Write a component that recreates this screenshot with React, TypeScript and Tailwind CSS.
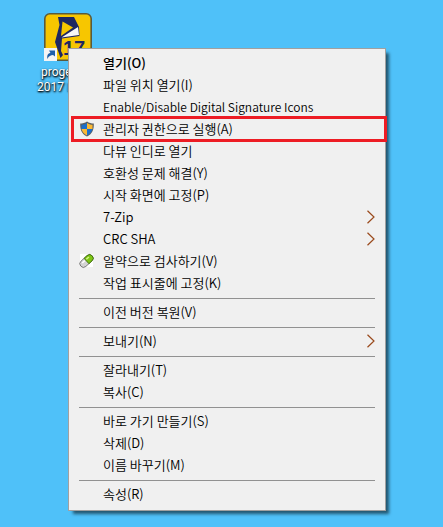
import React from 'react';
import clsx from 'clsx';

type MenuEntry = {
    label: string;
    bold?: boolean;
    small?: boolean;
    submenu?: boolean;
    highlighted?: boolean;
    icon?: React.ReactNode;
};

/**
 * 관리자 권한 방패 아이콘
 */
function ShieldIcon() {
    return (
        <svg viewBox="0 0 16 16" className="size-4" aria-hidden="true">
            <path d="M8 0.5 C6 2 3.5 2.6 1.2 2.6 C1 8.5 2.5 13 8 15.6 C13.5 13 15 8.5 14.8 2.6 C12.5 2.6 10 2 8 0.5Z" fill="#5c5f61" />
            <path d="M8 2 C6.3 3.1 4.5 3.7 2.5 3.8 V8 H8Z" fill="#1b6fcb" />
            <path d="M8 2 C9.7 3.1 11.5 3.7 13.5 3.8 V8 H8Z" fill="#fcb932" />
            <path d="M2.5 8 C3.2 11 5 13 8 14.4 V8Z" fill="#fcb932" />
            <path d="M13.5 8 C12.8 11 11 13 8 14.4 V8Z" fill="#1b6fcb" />
        </svg>
    );
}

/**
 * 알약 아이콘
 */
function PillIcon() {
    return (
        <svg viewBox="0 0 16 16" className="size-4" aria-hidden="true">
            <rect x="1" y="1" width="13" height="13" fill="#ffffff" />
            <g transform="rotate(-42 7.5 8)">
                <rect x="-0.2" y="4.4" width="15.4" height="7.2" rx="3.6" fill="#d4d4d4" stroke="#6b6b6b" strokeWidth="0.8" />
                <path d="M7.5 4.4 H11.6 A3.6 3.6 0 0 1 11.6 11.6 H7.5Z" fill="#7dc614" stroke="#3c6a0c" strokeWidth="0.8" />
                <path d="M8.5 6.6 H12" stroke="#d9f58d" strokeWidth="1.5" />
                <path d="M3 6.6 H6.5" stroke="#ffffff" strokeWidth="1.4" />
            </g>
        </svg>
    );
}

function SubmenuArrow() {
    return (
        <svg viewBox="0 0 8 14" className="h-3.5 w-2" fill="none" aria-hidden="true">
            <path d="M0.5 0.7 L7 7 L0.5 13.3" stroke="#9a4a1c" strokeWidth="1.2" />
        </svg>
    );
}

const groups: MenuEntry[][] = [
    [
        { label: '열기(O)', bold: true },
        { label: '파일 위치 열기(I)' },
        { label: 'Enable/Disable Digital Signature Icons', small: true },
        { label: '관리자 권한으로 실행(A)', highlighted: true, icon: <ShieldIcon /> },
        { label: '다뷰 인디로 열기' },
        { label: '호환성 문제 해결(Y)' },
        { label: '시작 화면에 고정(P)' },
        { label: '7-Zip', submenu: true },
        { label: 'CRC SHA', submenu: true },
        { label: '알약으로 검사하기(V)', icon: <PillIcon /> },
        { label: '작업 표시줄에 고정(K)' },
    ],
    [{ label: '이전 버전 복원(V)' }],
    [{ label: '보내기(N)', submenu: true }],
    [{ label: '잘라내기(T)' }, { label: '복사(C)' }],
    [{ label: '바로 가기 만들기(S)' }, { label: '삭제(D)' }, { label: '이름 바꾸기(M)' }],
    [{ label: '속성(R)' }],
];

function MenuItem({ label, bold, small, submenu, highlighted, icon }: MenuEntry) {
    return (
        <button
            type="button"
            role="menuitem"
            aria-haspopup={submenu ? 'menu' : undefined}
            className={clsx(
                'relative flex h-[22px] w-full items-center pr-2.5 pl-2.5 text-left',
                bold ? 'font-medium' : 'font-[350]',
                small && 'text-xs'
            )}
        >
            <span className="flex w-6 shrink-0">{icon}</span>
            <span className="grow whitespace-nowrap">{label}</span>
            {submenu && <SubmenuArrow />}
            {highlighted && (
                <span className="absolute -inset-y-0.5 -right-0.5 left-0.5 border-3 border-[#ed1c24]" />
            )}
        </button>
    );
}

/**
 * 바탕 화면 바로 가기
 */
function DesktopShortcut() {
    return (
        <div className="w-24 pt-[13px] font-[Roboto,sans-serif] text-xs text-white">
            <svg viewBox="0 0 48 48" className="ml-5 size-12" aria-hidden="true">
                <rect x="0.8" y="0.8" width="46.4" height="46.4" rx="5" fill="#f7c600" stroke="#5a5a3c" strokeWidth="1.6" />
                <path d="M14 4 H30 L35 14 L35.5 23 L18 25.5 L17 38 L19 42 L16.5 45 L11 29 L15.5 12Z" fill="#1e2761" />
                <path d="M18.5 8.5 L29 14.5 L17 23Z" fill="#f7c600" />
                <path d="M34 14 L35 22 L17.5 24.6Z" fill="#f7f7f7" />
                <text x="19" y="42" fontSize="20" fontWeight="700" fontFamily="Liberation Sans" fill="#1e2761">17</text>
                <rect x="0" y="35" width="13" height="13" fill="#f4f4f4" />
                <path d="M3.5 46 C2.5 42 4.5 40 6.5 40 L5 37.5 H11 V43.5 L9 42 C7 42 4.5 43 3.5 46Z" fill="#1f5fa8" />
            </svg>
            <p className="pt-1 pl-[17px] leading-[15px] [text-shadow:1px_1px_2px_#000,0_1px_2px_#000]">proge</p>
            <p className="pl-[13px] leading-[15px] [text-shadow:1px_1px_2px_#000,0_1px_2px_#000]">2017 I</p>
        </div>
    );
}

export default function App() {
    return (
        <main className="relative min-h-screen bg-[#4fc1f9] pl-6 font-['Noto_Sans_CJK_KR',sans-serif]">
            <DesktopShortcut />

            <div
                role="menu"
                className="absolute top-12 right-[57px] left-17 border border-[#a0a0a0] bg-[#f0f0f0] pt-[3px] pb-[5px] text-[13px] leading-[22px] text-black shadow-[4px_4px_3px_-1px_rgba(0,0,0,0.55)]"
            >
                {groups.map((group, index) => (
                    <React.Fragment key={index}>
                        {index > 0 && (
                            <hr className="mx-2.5 mt-1 mb-0.5 border-[#919191]" />
                        )}
                        {group.map((entry) => (
                            <MenuItem key={entry.label} {...entry} />
                        ))}
                    </React.Fragment>
                ))}
            </div>
        </main>
    );
}
